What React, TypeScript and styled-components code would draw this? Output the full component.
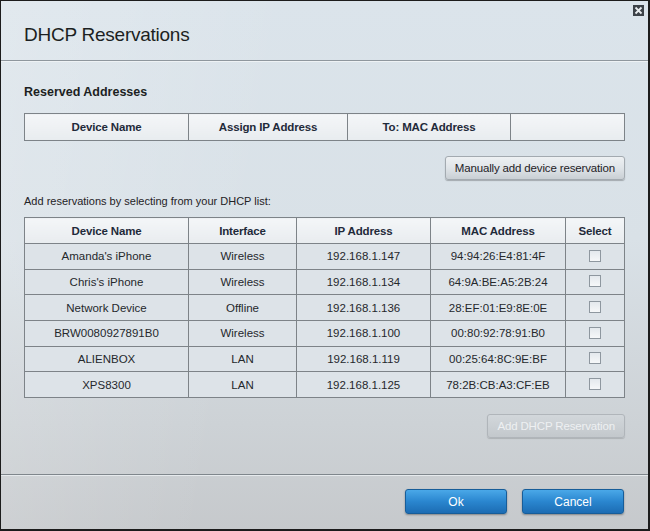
import React, { FC } from 'react';
import styled, { createGlobalStyle } from 'styled-components';

const GlobalStyle = createGlobalStyle`
  html, body {
    margin: 0;
    padding: 0;
    background: #1a1a1a;
  }
  * {
    box-sizing: border-box;
  }
`;

interface Lease {
  name: string;
  iface: string;
  ip: string;
  mac: string;
}

const LEASES: Lease[] = [
  { name: "Amanda's iPhone", iface: 'Wireless', ip: '192.168.1.147', mac: '94:94:26:E4:81:4F' },
  { name: "Chris's iPhone", iface: 'Wireless', ip: '192.168.1.134', mac: '64:9A:BE:A5:2B:24' },
  { name: 'Network Device', iface: 'Offline', ip: '192.168.1.136', mac: '28:EF:01:E9:8E:0E' },
  { name: 'BRW0080927891B0', iface: 'Wireless', ip: '192.168.1.100', mac: '00:80:92:78:91:B0' },
  { name: 'ALIENBOX', iface: 'LAN', ip: '192.168.1.119', mac: '00:25:64:8C:9E:BF' },
  { name: 'XPS8300', iface: 'LAN', ip: '192.168.1.125', mac: '78:2B:CB:A3:CF:EB' },
];

const CloseIcon: FC = () => (
  <svg width="11" height="11" viewBox="0 0 11 11">
    <rect x="0" y="0" width="11" height="11" fill="#3c4248" />
    <path d="M2.5 2.5 L8.5 8.5 M8.5 2.5 L2.5 8.5" stroke="#e9edf0" strokeWidth="1.8" />
  </svg>
);

export default function App() {
  return (
    <>
      <GlobalStyle />
      <Dialog>
        <Header>
          <Title>DHCP Reservations</Title>
          <CloseButton>
            <CloseIcon />
          </CloseButton>
        </Header>

        <Body>
          <SectionTitle>Reserved Addresses</SectionTitle>
          <Grid $height={28}>
            <colgroup>
              <col style={{ width: 164 }} />
              <col style={{ width: 159 }} />
              <col style={{ width: 163 }} />
              <col style={{ width: 114 }} />
            </colgroup>
            <thead>
              <tr>
                <HeadCell>Device Name</HeadCell>
                <HeadCell>Assign IP Address</HeadCell>
                <HeadCell>To: MAC Address</HeadCell>
                <HeadCell />
              </tr>
            </thead>
          </Grid>

          <ButtonRow $top={15}>
            <GrayButton>Manually add device reservation</GrayButton>
          </ButtonRow>

          <Caption>Add reservations by selecting from your DHCP list:</Caption>

          <Grid $height={181}>
            <colgroup>
              <col style={{ width: 164 }} />
              <col style={{ width: 108 }} />
              <col style={{ width: 134 }} />
              <col style={{ width: 135 }} />
              <col style={{ width: 59 }} />
            </colgroup>
            <thead>
              <tr>
                <HeadCell>Device Name</HeadCell>
                <HeadCell>Interface</HeadCell>
                <HeadCell>IP Address</HeadCell>
                <HeadCell>MAC Address</HeadCell>
                <HeadCell>Select</HeadCell>
              </tr>
            </thead>
            <tbody>
              {LEASES.map(lease => (
                <tr key={lease.mac}>
                  <Cell>{lease.name}</Cell>
                  <Cell>{lease.iface}</Cell>
                  <Cell>{lease.ip}</Cell>
                  <Cell>{lease.mac}</Cell>
                  <Cell>
                    <Check />
                  </Cell>
                </tr>
              ))}
            </tbody>
          </Grid>

          <ButtonRow $top={16}>
            <GrayButton disabled>Add DHCP Reservation</GrayButton>
          </ButtonRow>
        </Body>

        <Footer>
          <BlueButton>Ok</BlueButton>
          <BlueButton>Cancel</BlueButton>
        </Footer>
      </Dialog>
    </>
  );
}

const Dialog = styled.div`
  width: 650px;
  height: 531px;
  display: flex;
  flex-direction: column;
  border: 1px solid #1c1c1c;
  border-right-width: 2px;
  border-bottom-width: 2px;
  background:
    linear-gradient(100deg, rgba(255, 255, 255, 0.18) 0%, rgba(255, 255, 255, 0) 40%),
    linear-gradient(to bottom, #dbe4eb 0%, #d9e1e7 45%, #cdd2d6 80%, #c6c9cc 100%);
  font-family: 'Liberation Sans', Arial, sans-serif;
  color: #1f2226;
`;

const Header = styled.div`
  position: relative;
  height: 60px;
  flex: none;
  display: flex;
  align-items: center;
  padding: 8px 23px 0;
  border-bottom: 1px solid #8f979e;
  box-shadow: 0 1px 0 #eef2f5;
`;

const Title = styled.h1`
  margin: 0;
  font-size: 19px;
  font-weight: normal;
  color: #1c1f22;
  letter-spacing: -0.25px;
`;

const CloseButton = styled.div`
  position: absolute;
  top: 4px;
  right: 4px;
  width: 11px;
  height: 11px;
  line-height: 0;
`;

const Body = styled.div`
  flex: 1;
  padding: 23px 24px 0 23px;
  display: flex;
  flex-direction: column;
`;

const SectionTitle = styled.h2`
  margin: 0 0 13px;
  font-size: 12.5px;
  line-height: 16px;
  font-weight: bold;
  color: #1c1f22;
`;

const Grid = styled.table<{ $height: number }>`
  width: 601px;
  height: ${p => p.$height}px;
  border-collapse: collapse;
  table-layout: fixed;
  border: 1px solid #7d8388;
`;

const HeadCell = styled.th`
  height: 26px;
  padding: 0;
  border: 1px solid #7d8388;
  background: linear-gradient(to bottom, #f4f6f8, #e8ecef);
  font-size: 11.5px;
  font-weight: bold;
  letter-spacing: -0.15px;
  color: #1f2a3a;
  text-align: center;
`;

const Cell = styled.td`
  height: 25px;
  padding: 0;
  border: 1px solid #7d8388;
  background: #dde3e8;
  font-size: 11.5px;
  color: #25282c;
  text-align: center;
  vertical-align: middle;
`;

const Check = styled.span`
  display: inline-block;
  width: 12px;
  height: 12px;
  border: 1px solid #8e979f;
  background: linear-gradient(to bottom, #e4e9ed, #f6f8f9);
  vertical-align: middle;
  margin-top: -3px;
`;

const ButtonRow = styled.div<{ $top: number }>`
  display: flex;
  justify-content: flex-end;
  width: 601px;
  margin-top: ${p => p.$top}px;
`;

const GrayButton = styled.button`
  height: 24px;
  padding: 0 9px;
  border: 1px solid #a3aab0;
  border-radius: 3px;
  background: linear-gradient(to bottom, #eef1f3 0%, #dfe4e8 50%, #c9cfd4 100%);
  box-shadow: 0 1px 1px rgba(0, 0, 0, 0.25);
  font-family: 'Liberation Sans', Arial, sans-serif;
  font-size: 11.5px;
  letter-spacing: -0.15px;
  color: #1f2226;

  &:disabled {
    border-color: #b0b5ba;
    background: linear-gradient(to bottom, #d2d7db 0%, #c3c8cc 100%);
    color: #eef0f2;
    box-shadow: 0 1px 1px rgba(0, 0, 0, 0.15);
  }
`;

const Caption = styled.p`
  margin: 14px 0 9px;
  font-size: 11px;
  line-height: 14px;
  color: #1f2226;
`;

const Footer = styled.div`
  flex: none;
  height: 55px;
  display: flex;
  justify-content: flex-end;
  align-items: flex-start;
  gap: 15px;
  padding: 14px 24px 0;
  border-top: 1px solid #7f868c;
  box-shadow: inset 0 1px 0 #e6eaed;
`;

const BlueButton = styled.button`
  width: 102px;
  height: 25px;
  border: 1px solid #175d99;
  border-radius: 3px;
  background: linear-gradient(to bottom, #4aa8e8 0%, #2a86cf 50%, #1c6cb3 100%);
  box-shadow: 0 1px 2px rgba(0, 0, 0, 0.35);
  font-family: 'Liberation Sans', Arial, sans-serif;
  font-size: 12px;
  color: #ffffff;
`;
